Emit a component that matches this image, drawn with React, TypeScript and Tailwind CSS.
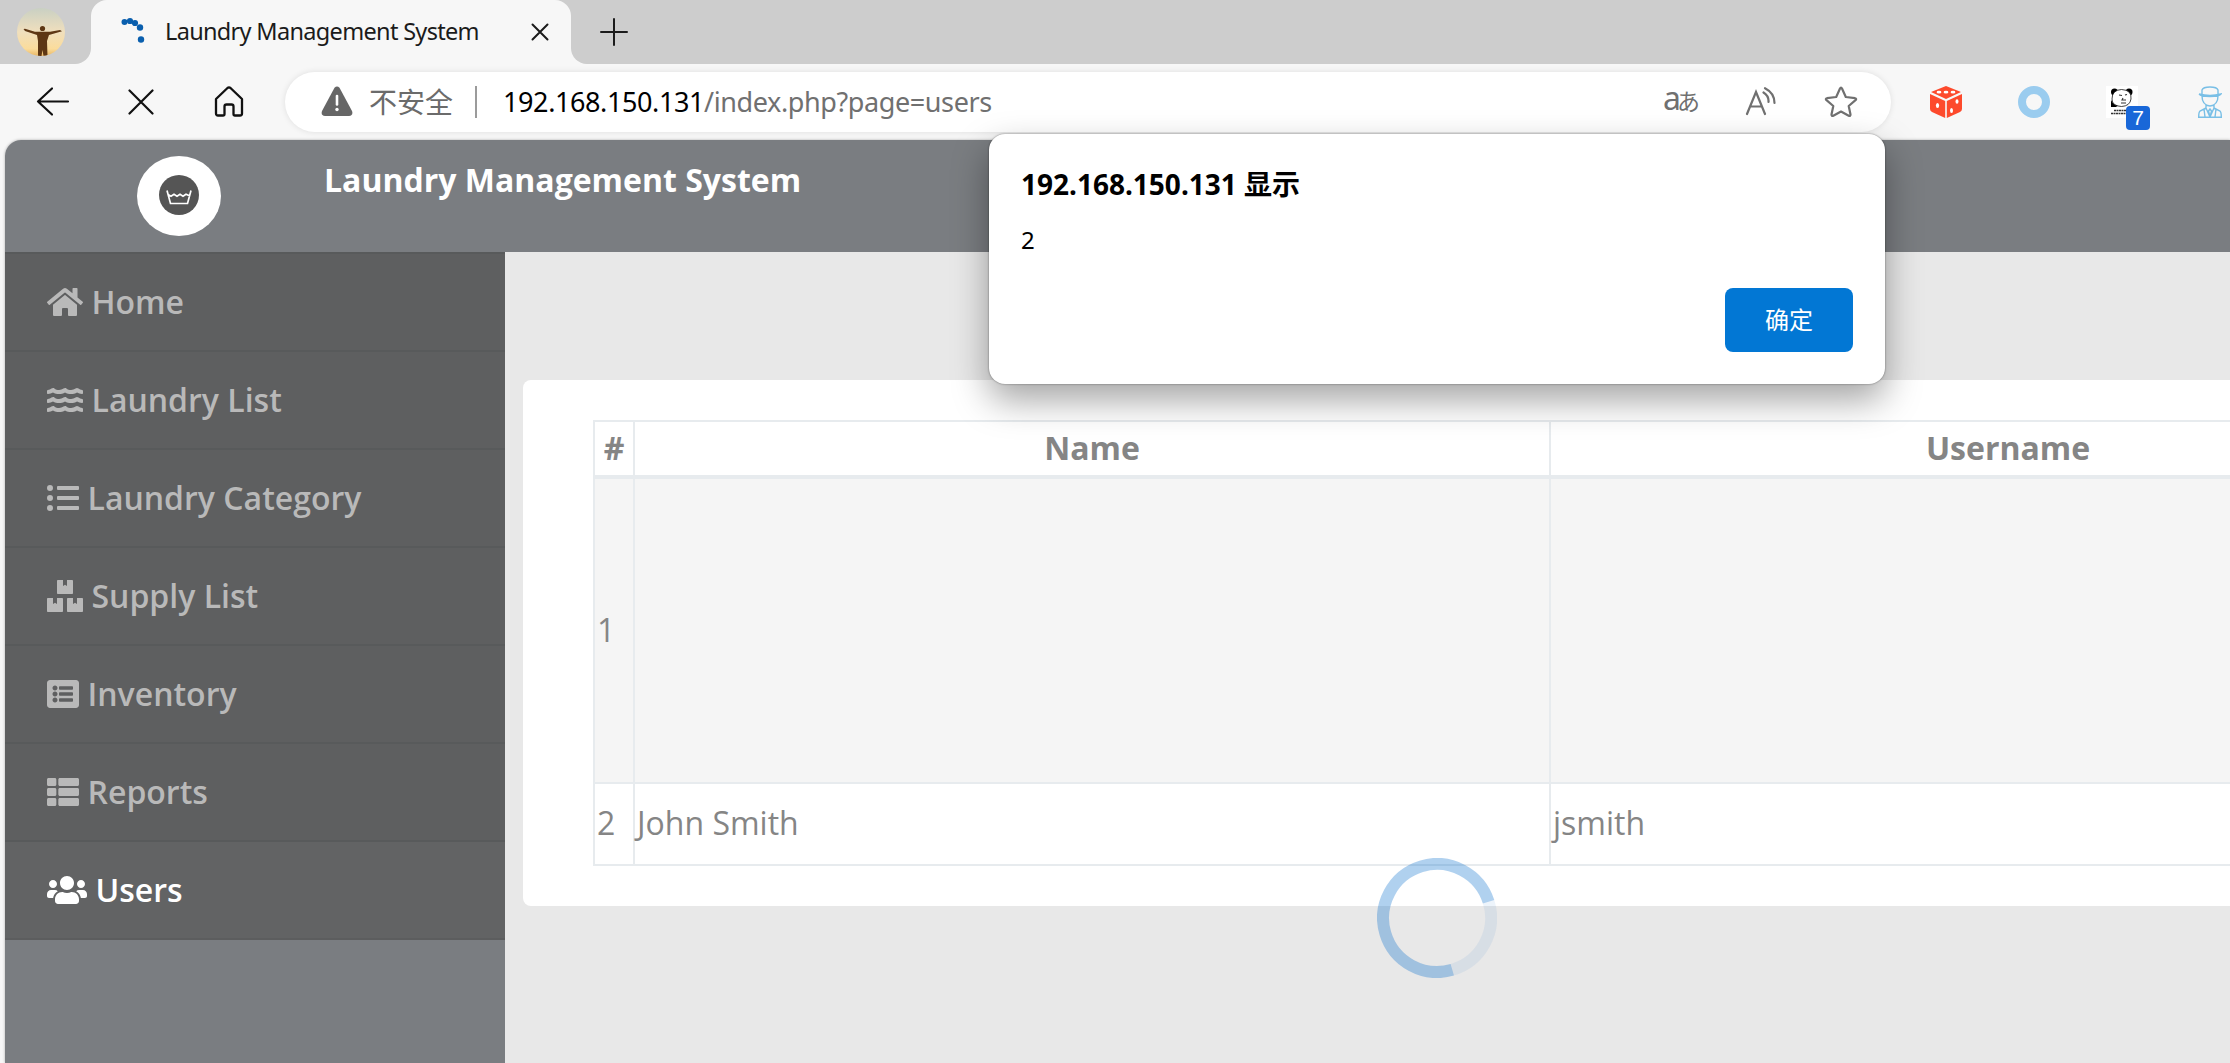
import React from "react";
import { FaHome, FaWater, FaListUl, FaBoxes, FaListAlt, FaThList, FaUsers } from "react-icons/fa";

const items = [
  { label: "Home", Icon: FaHome, w: "w-9" },
  { label: "Laundry List", Icon: FaWater, w: "w-9" },
  { label: "Laundry Category", Icon: FaListUl, w: "w-8" },
  { label: "Supply List", Icon: FaBoxes, w: "w-9" },
  { label: "Inventory", Icon: FaListAlt, w: "w-8" },
  { label: "Reports", Icon: FaThList, w: "w-8" },
  { label: "Users", Icon: FaUsers, w: "w-10", active: true },
];

function Avatar() {
  return (
    <svg width="48" height="48" viewBox="0 0 48 48">
      <defs>
        <linearGradient id="sky" x1="0" y1="0" x2="0" y2="1">
          <stop offset="0" stopColor="#c9d0c3" />
          <stop offset="0.5" stopColor="#f0dfbd" />
          <stop offset="0.85" stopColor="#fbdc9b" />
          <stop offset="1" stopColor="#e9b765" />
        </linearGradient>
        <clipPath id="round"><circle cx="24" cy="24" r="24" /></clipPath>
      </defs>
      <g clipPath="url(#round)">
        <rect width="48" height="48" fill="url(#sky)" />
        <g fill="#5e3714">
          <circle cx="25.500" cy="20.500" r="2.600" />
          <path d="M6.500 21L8 20.700L18 23.800H33L43 22L45 23.200L32 27L30 33L30.500 48H26.500L25.500 42L24.500 48H21L21 33L20 27L8 23Z" />
        </g>
      </g>
    </svg>
  );
}

function TabBar() {
  return (
    <div className="flex h-16 shrink-0 bg-[#cdcdcd]">
      <div className="w-[91px] bg-[#f7f7f7]">
        <div className="flex h-16 items-center rounded-br-2xl bg-[#cdcdcd] pl-[17px]">
          <Avatar />
        </div>
      </div>
      <div className="flex w-[480px] items-center rounded-t-2xl bg-[#f7f7f7] pl-7">
        <svg width="30" height="30" viewBox="0 0 30 30" fill="#0a5fae">
          <circle cx="5.500" cy="5" r="3" />
          <circle cx="11" cy="4" r="3.100" />
          <circle cx="16" cy="6" r="3.100" />
          <circle cx="21" cy="10.500" r="3.200" />
          <circle cx="22" cy="22.500" r="3.200" />
        </svg>
        <span className="ml-4 w-[366px] text-[23.500px] leading-none tracking-[-0.680px] text-[#1b1b1b]">Laundry Management System</span>
        <svg width="18" height="18" viewBox="0 0 18 18" stroke="#1b1b1b" strokeWidth="2" strokeLinecap="round">
          <path d="M1.500 1.500L16.500 16.500M16.500 1.500L1.500 16.500" />
        </svg>
      </div>
      <div className="w-10 bg-[#f7f7f7]">
        <div className="flex h-16 w-[60px] items-center rounded-bl-2xl bg-[#cdcdcd] pl-[29px]">
          <svg className="shrink-0" width="28" height="28" viewBox="0 0 28 28" stroke="#1b1b1b" strokeWidth="2" strokeLinecap="round">
            <path d="M14 1V27M1 14H27" />
          </svg>
        </div>
      </div>
    </div>
  );
}

function Toolbar() {
  return (
    <div className="flex h-[76px] shrink-0 items-center bg-[#f7f7f7]">
      <svg className="ml-9 shrink-0" width="34" height="32" viewBox="0 0 34 32" fill="none" stroke="#111" strokeWidth="2.200" strokeLinecap="round" strokeLinejoin="round">
        <path d="M16 2.500L2 15.500L16 28.500M2 15.500H32" />
      </svg>
      <svg className="ml-[58px] shrink-0" width="26" height="26" viewBox="0 0 26 26" stroke="#111" strokeWidth="2.200" strokeLinecap="round">
        <path d="M1.500 1.500L24.500 24.500M24.500 1.500L1.500 24.500" />
      </svg>
      <svg className="ml-[59px] shrink-0" width="32" height="32" viewBox="0 0 32 32" fill="none" stroke="#111" strokeWidth="2.300" strokeLinejoin="round">
        <path d="M3 13L14.500 2Q16 0.800 17.500 2L29 13V27.500Q29 29.500 27 29.500H22Q20.500 29.500 20.500 28V20.500Q20.500 18.500 18.500 18.500H13.500Q11.500 18.500 11.500 20.500V28Q11.500 29.500 10 29.500H5Q3 29.500 3 27.500Z" />
      </svg>
      <div className="ml-10 flex h-[60px] w-[1606px] shrink-0 items-center rounded-full bg-white shadow-[0_0_6px_rgba(0,0,0,0.1)]">
        <svg className="ml-9 -mt-0.5" width="32" height="30" viewBox="0 0 32 30">
          <path d="M13.500 1.800Q16 -1 18.500 1.800L31 25Q32.500 29.500 28 30H4Q-0.500 29.500 1 25Z" fill="#666" />
          <path d="M16 10V18.500" stroke="#fff" strokeWidth="2.600" strokeLinecap="round" />
          <circle cx="16" cy="23.500" r="1.700" fill="#fff" />
        </svg>
        <span className="ml-4 text-[28px] leading-none text-[#6b6b6b]">不安全</span>
        <span className="ml-[22px] h-8 w-0.5 bg-[#9b9b9b]" />
        <span className="ml-[26px] w-[1160px] pb-0.5 text-[27px] leading-none tracking-[-0.400px] text-[#707070]"><span className="text-black">192.168.150.131</span>/index.php?page=users</span>
        <Translate />
        <svg className="ml-[46px]" width="32" height="30" viewBox="0 0 32 30" fill="none" stroke="#707070" strokeWidth="2.200" strokeLinecap="round">
          <path d="M2 27L11 5L20 27M5 19.500H17M18.500 5.500Q24 9 23.500 15M20 1.200Q29.500 6 29.500 16" />
        </svg>
        <svg className="ml-[47px]" width="34" height="34" viewBox="0 0 34 34" fill="none" stroke="#707070" strokeWidth="2.200" strokeLinejoin="round">
          <path d="M16 3.500Q17 1.500 18 3.500L21.800 12L31 13.200Q33 13.700 31.500 15.200L24.700 21L26.500 29.500Q26.500 31.500 24.700 30.700L17 26.500L9.300 30.700Q7.500 31.500 7.500 29.500L9.300 21L2.500 15.200Q1 13.700 3 13.200L12.200 12Z" />
        </svg>
      </div>
      <Extensions />
    </div>
  );
}

function Translate() {
  return <span className="flex w-9 items-baseline pb-2 text-[32px] leading-none text-[#707070]">a<span className="-ml-1 text-[23px]">あ</span></span>;
}

function Extensions() {
  return (
    <div className="flex shrink-0 items-center">
      <svg className="ml-[39px]" width="32" height="32" viewBox="0 0 32 32">
        <g fill="#fd4a2c">
          <path d="M16 0L31 6L16 13L1 6Z" />
          <path d="M0 8L15.200 15V32L2 26Q0 25 0 23Z" />
          <path d="M32 8L16.800 15V32L30 26Q32 25 32 23Z" />
        </g>
        <g fill="#fff">
          <ellipse cx="9" cy="6.200" rx="2.400" ry="1.400" />
          <ellipse cx="16" cy="6.200" rx="2.400" ry="1.400" />
          <ellipse cx="23" cy="6.200" rx="2.400" ry="1.400" />
          <ellipse cx="7.500" cy="19.500" rx="1.600" ry="2.500" />
          <ellipse cx="27" cy="15.500" rx="1.500" ry="2.300" />
          <ellipse cx="21.500" cy="24.500" rx="1.500" ry="2.500" />
        </g>
      </svg>
      <span className="ml-14 size-8 rounded-full border-8 border-[#9accef]" />
      <span className="relative ml-14 flex size-8 bg-white">
        <svg width="32" height="32" viewBox="0 0 32 32">
          <circle cx="8.500" cy="6" r="3.500" />
          <circle cx="23" cy="6" r="3.500" />
          <path d="M6 13Q6 4 15.500 3.500Q26 4 25 13Q24 20 15.500 20.500Q6 20 6 13Z" fill="#fff" stroke="#111" strokeWidth="0.800" />
          <path d="M13 9L16 9.500M19 9L21 8.500M17 12L16 14H20M15 17H20" stroke="#333" strokeWidth="1.100" fill="none" />
          <path d="M5 14Q8 20 12 19.500L10 21H5Z" />
          <path d="M8 24.500H20M5 27.500H20" stroke="#333" strokeWidth="1.500" strokeDasharray="2 0.500" />
        </svg>
        <span className="absolute left-5 top-5 flex h-6 w-6 items-center justify-center rounded bg-[#1967d8] pb-0.5 font-['Liberation_Sans',sans-serif] text-[21px] leading-none text-white">7</span>
      </span>
      <svg className="ml-[60px] shrink-0" width="24" height="32" viewBox="0 0 24 32" fill="none" stroke="#79bfe6" strokeWidth="1.400">
        <path d="M4 8V4Q5 1 12 1Q19 1 20 4V8M1 8Q12 11 23 8Q21 10.500 12 10.500Q3 10.500 1 8M4 10Q4 19 12 20Q20 19 20 10M8 19V22L2 25Q0.700 26 0.700 31.300H23.300Q23.300 26 22 25L16 22V19M8 22L12 31L16 22M12 23L10.500 25L12 31L13.500 25ZM6 23L7 31M18 23L17 31" />
      </svg>
    </div>
  );
}

function Header() {
  return (
    <header className="flex h-28 shrink-0 bg-[#7a7d81]">
      <div className="ml-[132px] mt-4 flex h-20 w-[84px] items-center justify-center rounded-[50%] bg-white pb-0.5">
        <svg width="40" height="40" viewBox="0 0 40 40">
          <circle cx="20" cy="20" r="20" fill="#555" />
          <path d="M8 15.500L11.500 28.500H28.500L32 15.500M9 19.500L12 21.300L15 19.300L18 21.300L21 19.300L24 21.300L27 19.300L31 21" fill="none" stroke="#fff" strokeWidth="1.700" />
        </svg>
      </div>
      <h1 className="ml-[103px] mt-[21px] text-[32px] font-bold leading-[38px] text-white">Laundry Management System</h1>
    </header>
  );
}

function Sidebar() {
  return (
    <nav className="w-[500px] shrink-0 bg-[#7a7d81]">
      <div className="border-t-2 border-[#585a5b]">
        {items.map(({ label, Icon, w, active }) => (
          <a key={label} className={active ? "flex h-[98px] items-center border-b-2 border-[#5c5d5e] bg-[#626364] pl-[42px] text-white" : "flex h-[98px] items-center border-b-2 border-[#585a5b] bg-[#5e5f60] pl-[42px] text-[#b9b9b9]"}>
            <Icon className={"h-8 shrink-0 " + w} preserveAspectRatio="none" />
            <span className="ml-[8.500px] text-[32px] font-semibold leading-none">{label}</span>
          </a>
        ))}
      </div>
    </nav>
  );
}

function UsersTable() {
  return (
    <table className="h-[446px] w-[1874px] table-fixed border-collapse text-[32px] leading-[48px] text-[#858585]">
      <colgroup>
        <col className="w-10" />
        <col className="w-[916px]" />
        <col />
      </colgroup>
      <thead>
        <tr className="h-14 [&>th]:border-2 [&>th]:border-b-4 [&>th]:border-[#e7ebee]">
          <th className="p-0 pb-px">#</th>
          <th className="p-0 pb-px">Name</th>
          <th className="p-0 pb-px">Username</th>
        </tr>
      </thead>
      <tbody className="[&_td]:border-2 [&_td]:border-[#e7ebee] [&_td]:px-0.5 [&_td]:pb-0.5">
        <tr className="h-[306px] bg-[#f5f5f5]">
          <td>1</td>
          <td />
          <td />
        </tr>
        <tr className="h-[82px]">
          <td>2</td>
          <td>John Smith</td>
          <td>jsmith</td>
        </tr>
      </tbody>
    </table>
  );
}

function AlertDialog() {
  return (
    <div className="absolute left-[989px] top-[134px] flex h-[250px] w-[896px] flex-col rounded-2xl bg-white px-8 pt-8 text-black shadow-[0_0_2px_rgba(0,0,0,0.5),0_16px_36px_rgba(0,0,0,0.36)]">
      <h2 className="text-[28px] font-bold leading-9">192.168.150.131 显示</h2>
      <p className="mt-5 text-2xl leading-9">2</p>
      <button className="mt-[30px] h-16 w-32 self-end rounded-lg bg-[#0277d4] text-2xl text-white">确定</button>
    </div>
  );
}

function Spinner() {
  return (
    <svg className="absolute left-[1377px] top-[858px]" width="120" height="120" viewBox="0 0 120 120" fill="none" strokeWidth="12" stroke="#0069ca">
      <path d="M111.600 43.800A54 54 0 1 0 75.300 111.800" opacity="0.310" />
      <path d="M111.600 43.800A54 54 0 0 1 75.300 111.800" opacity="0.070" />
    </svg>
  );
}

export default function App() {
  return (
    <div className="relative flex h-[1063px] w-[2230px] flex-col overflow-hidden bg-[#f7f7f7] font-['Noto_Sans','Noto_Sans_CJK_SC',sans-serif]">
      <TabBar />
      <Toolbar />
      <div className="ml-[5px] flex flex-1 flex-col overflow-hidden rounded-tl-2xl font-['Open_Sans','Noto_Sans',sans-serif] shadow-[0_0_3px_rgba(0,0,0,0.3)]">
        <Header />
        <div className="flex flex-1">
          <Sidebar />
          <main className="flex-1 overflow-hidden bg-[#e8e8e8] pl-[18px] pt-32">
            <section className="h-[526px] w-[2014px] rounded-lg bg-white pl-[70px] pt-10">
              <UsersTable />
            </section>
          </main>
        </div>
      </div>
      <Spinner />
      <AlertDialog />
    </div>
  );
}
